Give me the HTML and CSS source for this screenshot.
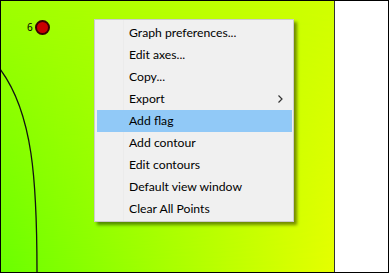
FILE: index.html
```html
<!DOCTYPE html>
<html lang="en">
<head>
    <meta charset="UTF-8">
    <title>Graph</title>
    <link rel="stylesheet" href="styles.css">
</head>
<body>
    <div class="window">
        <div class="plot">
            <svg class="contour" width="333" height="272" viewBox="0 0 333 272">
                <path d="M -1 68 C 32 112, 36 180, 36 272" fill="none" stroke="#111" stroke-width="1.3"/>
            </svg>
            <span class="point-label">6</span>
            <span class="point"></span>

            <ul class="context-menu">
                <li>Graph preferences...</li>
                <li>Edit axes...</li>
                <li>Copy...</li>
                <li class="has-sub">Export
                    <svg class="chevron" width="5" height="8" viewBox="0 0 5 8">
                        <path d="M0.5 0.5 L4 4 L0.5 7.5" fill="none" stroke="#333" stroke-width="1.2"/>
                    </svg>
                </li>
                <li class="active">Add flag</li>
                <li>Add contour</li>
                <li>Edit contours</li>
                <li>Default view window</li>
                <li>Clear All Points</li>
            </ul>
        </div>
        <div class="side"></div>
    </div>
</body>
</html>
```

FILE: styles.css
```css
body {
    margin: 0;
    font-family: "Noto Sans", sans-serif;
}
.window {
    width: 389px;
    height: 273px;
    box-sizing: border-box;
    border: 1px solid #000;
    display: flex;
}
.plot {
    position: relative;
    flex: 1;
    border-right: 1px solid #333;
    background: linear-gradient(to right, #6aff00, #e6ff00);
    overflow: hidden;
}
.plot::before {
    content: "";
    position: absolute;
    inset: 0;
    background: linear-gradient(to right, #9eff00, #d0ff00);
    -webkit-mask-image: linear-gradient(to bottom, #000, transparent);
    mask-image: linear-gradient(to bottom, #000, transparent);
}
.side {
    width: 53px;
    background: #fff;
}
.contour {
    position: absolute;
    left: 0;
    top: 0;
}
.point {
    position: absolute;
    left: 34px;
    top: 19px;
    width: 11px;
    height: 11px;
    border-radius: 50%;
    background: #c80000;
    border: 2px solid #3a0000;
}
.point-label {
    position: absolute;
    left: 26px;
    top: 20px;
    font-size: 10px;
    line-height: 12px;
    color: #000;
}
.context-menu {
    position: absolute;
    left: 93px;
    top: 18px;
    width: 200px;
    margin: 0;
    padding: 2px 1px 1px 2px;
    list-style: none;
    box-sizing: border-box;
    background: #f0f0f0;
    border: 1px solid #ccc;
    box-shadow: 3px 3px 3px rgba(0, 0, 0, 0.45);
    font-family: Lato, "Noto Sans", sans-serif;
    font-size: 12.2px;
}
.context-menu::before {
    content: "";
    position: absolute;
    left: 28px;
    top: 0;
    bottom: 0;
    width: 1px;
    background: #ebebeb;
}
.context-menu li {
    position: relative;
    height: 22px;
    line-height: 22px;
    padding-left: 32px;
    color: #000;
    white-space: nowrap;
}
.context-menu li.active {
    background: #91c9f7;
}
.chevron {
    position: absolute;
    right: 9px;
    top: 7px;
}
```
